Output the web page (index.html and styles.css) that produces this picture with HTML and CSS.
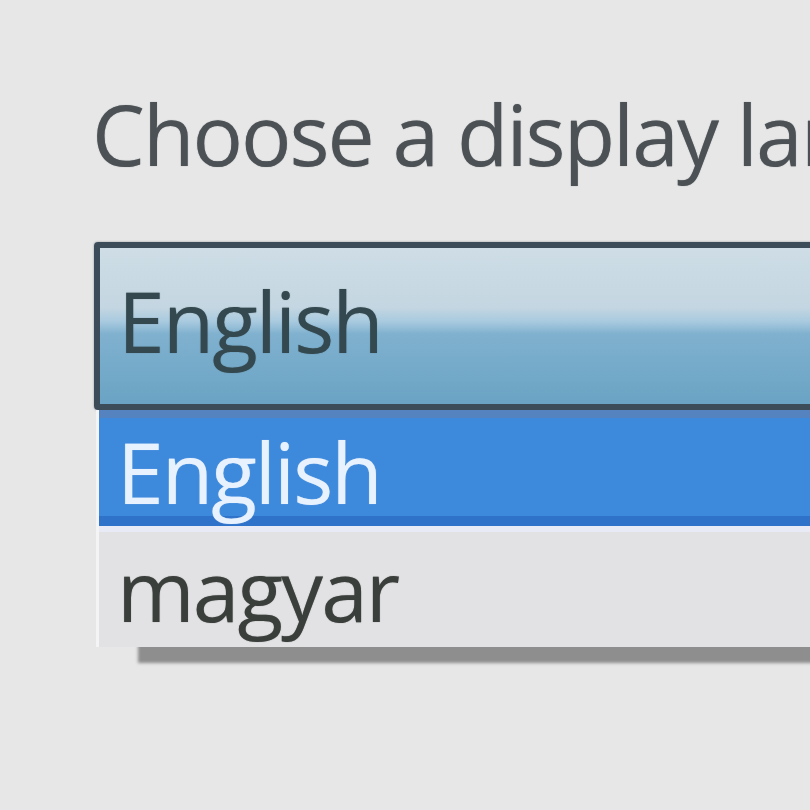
FILE: index.html
```html
<!DOCTYPE html>
<html lang="en">
<head>
    <meta charset="UTF-8">
    <meta name="viewport" content="width=device-width, initial-scale=1.0">
    <title>Display language</title>
    <link rel="stylesheet" href="styles.css">
</head>
<body>
    <div class="panel">
        <p class="prompt">Choose a display language</p>

        <div class="picker">
            <div class="combo">
                <span class="combo-value">English</span>
            </div>
            <ul class="options">
                <li class="option selected">English</li>
                <li class="option">magyar</li>
            </ul>
        </div>
    </div>
</body>
</html>
```

FILE: styles.css
```css
* {
    box-sizing: border-box;
    margin: 0;
    padding: 0;
}

body {
    font-family: 'Open Sans', 'Noto Sans', sans-serif;
    background-color: #e7e7e7;
    width: 810px;
    height: 810px;
    overflow: hidden;
}

.panel {
    padding: 84px 0 0 92px;
    width: 1400px;
}

.prompt {
    font-size: 84px;
    font-weight: 500;
    line-height: 100px;
    color: #4b5155;
    letter-spacing: -2px;
    white-space: nowrap;
    text-shadow: 0 0 1px rgba(75, 81, 85, 0.6);
}

.picker {
    margin-top: 58px;
    margin-left: 2px;
}

.combo {
    height: 168px;
    border: 6px solid #3d4c59;
    border-radius: 4px 0 0 4px;
    background: linear-gradient(to bottom, #cedde6 0%, #c4d6e1 38%, #a9cadf 47%, #80b1cf 55%, #6aa3c4 100%);
    display: flex;
    align-items: center;
    padding-left: 18px;
    box-shadow: 0 0 2px rgba(40, 55, 70, 0.5);
}

.combo-value {
    font-size: 84px;
    font-weight: 500;
    letter-spacing: -2px;
    color: #33484f;
    line-height: 1;
    margin-top: -10px;
    text-shadow: 0 0 1px rgba(51, 72, 79, 0.6);
}

.options {
    list-style: none;
    margin-left: 2px;
    background: #e2e2e4;
    border-left: 3px solid #f4f4f4;
    box-shadow: 40px 18px 3px -2px #8e8e8e;
}

.option {
    font-size: 84px;
    font-weight: 500;
    letter-spacing: -2px;
    line-height: 1;
    color: #3b3f3c;
    height: 121px;
    padding: 22px 0 0 18px;
    text-shadow: 0 0 1px rgba(59, 63, 60, 0.6);
}

.option.selected {
    height: 116px;
    padding-top: 12px;
    background-color: #3d89dc;
    color: #e8f2ff;
    border-top: 8px solid #5583c0;
    border-bottom: 10px solid #2f72c9;
    box-shadow: 0 6px 0 #e8eaf6;
    text-shadow: 0 0 1px rgba(232, 242, 255, 0.6);
}
```
